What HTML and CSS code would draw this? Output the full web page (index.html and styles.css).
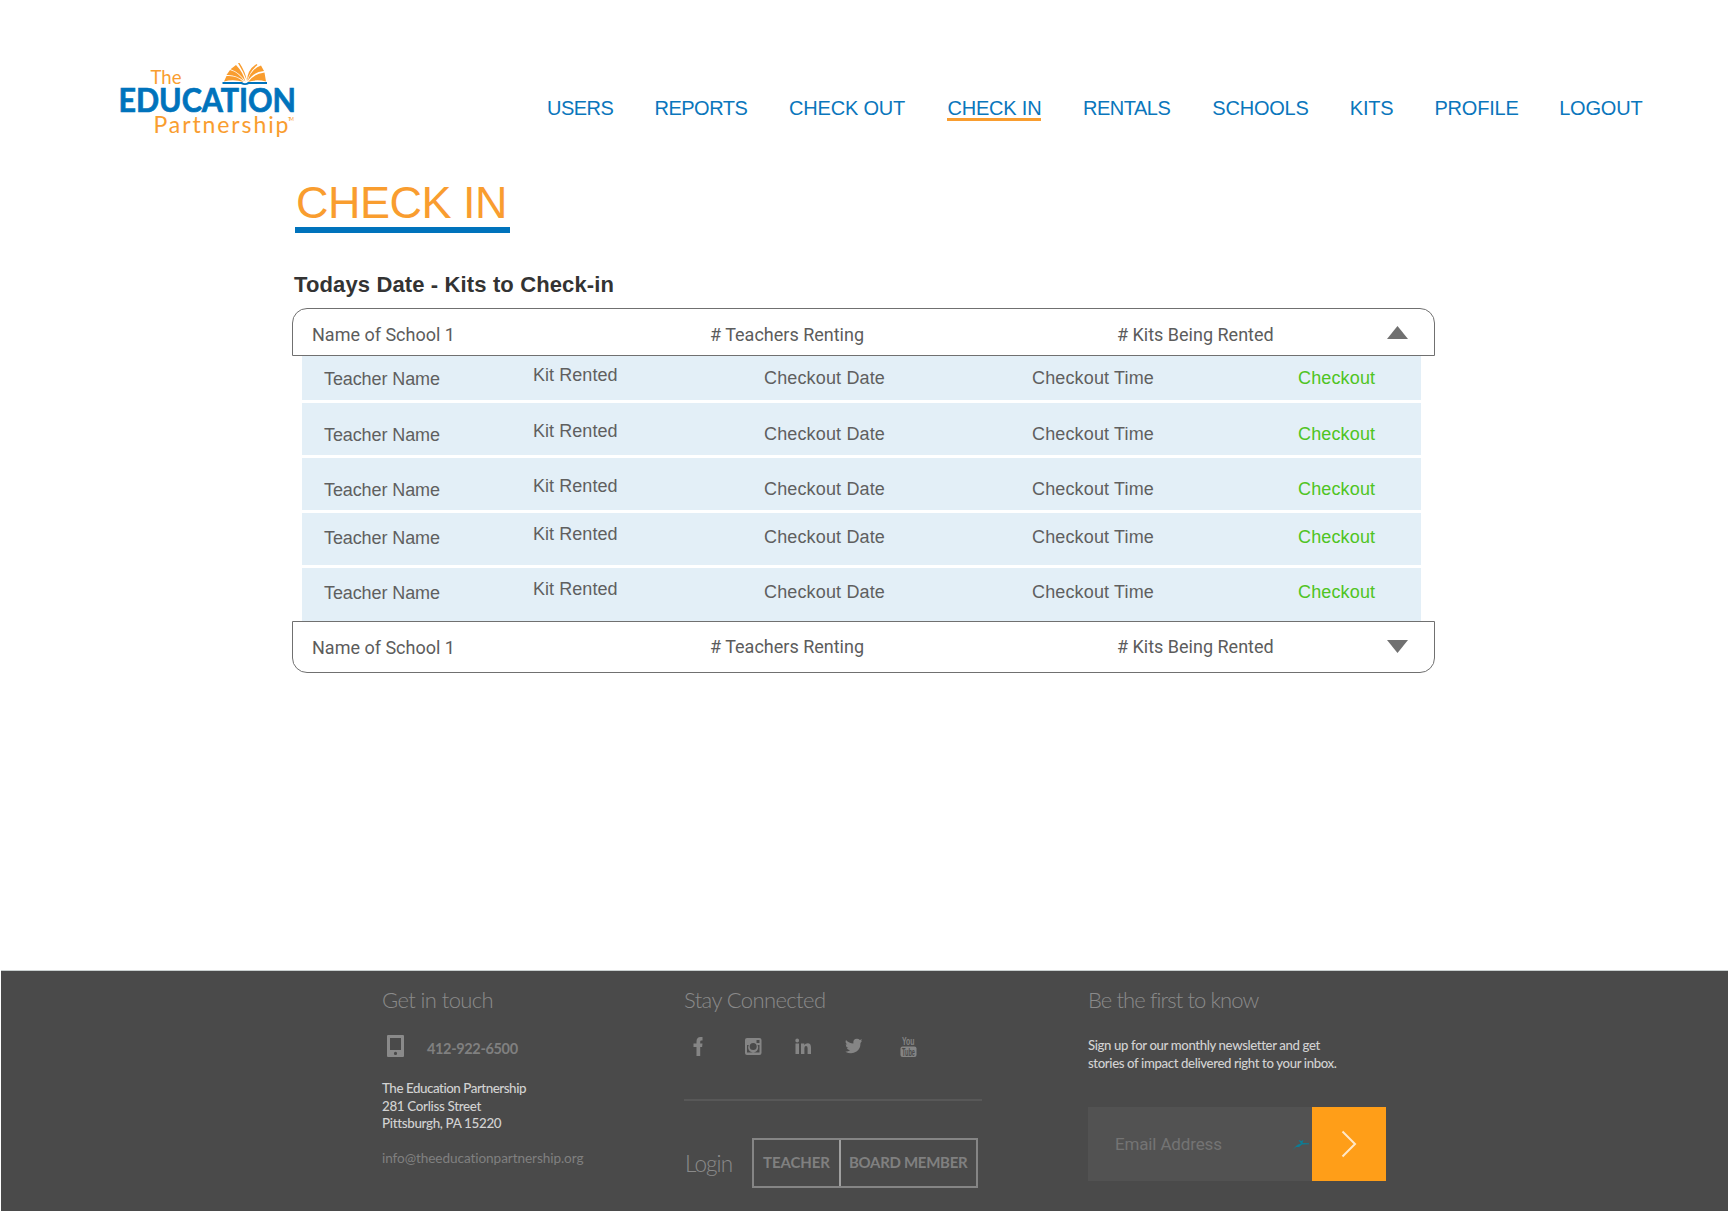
FILE: index.html
```html
<!DOCTYPE html>
<html lang="en">
<head>
<meta charset="utf-8">
<title>Check In</title>
<link rel="stylesheet" href="styles.css">
</head>
<body>
<header class="top">
  <svg class="logo" width="180" height="84" viewBox="118 58 180 84" role="img" aria-label="The Education Partnership">
    <g fill="#f99d2f">
      <path d="M224 81.500L226.500 76Q237 75 243.500 82Q234 79 224 81.500Z"/>
      <path d="M226.500 75L230 70Q240 73 244 81.500Q237 74.500 226.500 75Z"/>
      <path d="M230.500 69.300L236 65Q243 72 245.500 82Q240 72.500 230.500 69.300Z"/>
      <path d="M238 63L239.500 63Q245 71 247 81Q243 71 238 63Z"/>
      <path d="M247 81.500Q247 70 256.500 64L257.500 65Q249.500 71.500 247 81.500Z"/>
      <path d="M247.500 81.500Q251 69 261 65.500L264 71Q253 72 247.500 81.500Z"/>
      <path d="M248 82Q254 73.500 264.500 72.500L266 81.500Q256 79 248 82Z"/>
    </g>
    <path d="M222.500 82H242Q245 84.500 248 82H267V84H249Q245 86 241 84H222.500Z" fill="#0073bc"/>
    <text class="logo-thin" x="150.500" y="83.500" font-size="18.500" textLength="31" lengthAdjust="spacingAndGlyphs">The</text>
    <text class="logo-bold" x="118.500" y="111.500" font-size="32.500" textLength="177.500" lengthAdjust="spacingAndGlyphs">EDUCATION</text>
    <text class="logo-thin" x="153.500" y="132.500" font-size="23" textLength="135" lengthAdjust="spacing">Partnership</text>
    <text class="logo-thin" x="288" y="121" font-size="5" textLength="6">TM</text>
  </svg>
  <nav class="nav">
    <a class="tight">USERS</a><a class="tight">REPORTS</a><a>CHECK OUT</a><a class="active">CHECK IN</a><a class="tight">RENTALS</a><a>SCHOOLS</a><a>KITS</a><a>PROFILE</a><a>LOGOUT</a>
  </nav>
</header>
<main class="main">
  <h1 class="title">CHECK IN</h1>
  <h2 class="subtitle">Todays Date - Kits to Check-in</h2>
  <section class="school school-open">
    <span>Name of School 1</span><span># Teachers Renting</span><span># Kits Being Rented</span>
    <svg width="21" height="13" viewBox="0 0 21 13"><path d="M10.500 0L21 13H0Z" fill="#707070"/></svg>
  </section>
  <div class="rentals">
    <div class="rental first"><span class="teacher">Teacher Name</span><span class="kit">Kit Rented</span><span>Checkout Date</span><span>Checkout Time</span><a>Checkout</a></div>
    <div class="rental low"><span class="teacher">Teacher Name</span><span class="kit">Kit Rented</span><span>Checkout Date</span><span>Checkout Time</span><a>Checkout</a></div>
    <div class="rental low"><span class="teacher">Teacher Name</span><span class="kit">Kit Rented</span><span>Checkout Date</span><span>Checkout Time</span><a>Checkout</a></div>
    <div class="rental"><span class="teacher">Teacher Name</span><span class="kit">Kit Rented</span><span>Checkout Date</span><span>Checkout Time</span><a>Checkout</a></div>
    <div class="rental"><span class="teacher">Teacher Name</span><span class="kit">Kit Rented</span><span>Checkout Date</span><span>Checkout Time</span><a>Checkout</a></div>
  </div>
  <section class="school school-closed">
    <span class="name">Name of School 1</span><span># Teachers Renting</span><span># Kits Being Rented</span>
    <svg width="21" height="13" viewBox="0 0 21 13"><path d="M0 0H21L10.500 13Z" fill="#707070"/></svg>
  </section>
</main>
<footer class="footer">
  <div class="col">
    <h3 class="h-touch">Get in touch</h3>
    <div class="phone">
      <svg width="17" height="22" viewBox="0 0 17 22"><path fill="#8a8a8a" fill-rule="evenodd" d="M1 0H16Q17 0 17 1V21Q17 22 16 22H1Q0 22 0 21V1Q0 0 1 0ZM3 3V15H14V3ZM8.500 16.800A1.600 1.600 0 1 0 8.500 20A1.600 1.600 0 1 0 8.500 16.800Z"/></svg>
      <b>412-922-6500</b>
    </div>
    <p class="address"><span class="org">The Education Partnership</span><br>281 Corliss Street<br>Pittsburgh, PA 15220</p>
    <a class="email">info@theeducationpartnership.org</a>
  </div>
  <div class="col">
    <h3 class="h-stay">Stay Connected</h3>
    <svg class="social" width="240" height="24" viewBox="684 1034 240 24" fill="#858585">
      <path d="M696.500 1056V1047H693.500V1043.500H696.500V1041.500Q696.500 1037 700.500 1037H702.500V1040.500H701.300Q700.200 1040.500 700.200 1041.800V1043.500H702.500L702.100 1047H700.200V1056Z"/>
      <path fill-rule="evenodd" d="M747 1038H759.500Q761.500 1038 761.500 1040V1053Q761.500 1055 759.500 1055H747Q745 1055 745 1053V1040Q745 1038 747 1038ZM756.500 1040V1043H759.500V1040ZM747 1045V1052.500H759.500V1045H757.500A5 5 0 1 1 748.800 1045ZM753.200 1043A3.500 3.500 0 1 0 753.200 1050A3.500 3.500 0 1 0 753.200 1043Z"/>
      <path d="M795.500 1043.500H799V1054H795.500ZM797.200 1038.600A1.900 1.900 0 1 1 797.200 1042.400A1.900 1.900 0 1 1 797.200 1038.600ZM801 1043.500H804.300V1045Q805.500 1043.200 807.700 1043.200Q811 1043.200 811 1047.500V1054H807.600V1048.300Q807.600 1046.100 806 1046.100Q804.400 1046.100 804.400 1048.300V1054H801Z"/>
      <path d="M846 1040Q849 1043.300 853.400 1043.500Q852.700 1039 857 1038.800Q858.700 1038.800 859.800 1040L862 1039.200L861 1041.200L862 1041L860.500 1043Q860.500 1049 856.500 1051.500Q851.500 1054.800 845.300 1051.700Q848.400 1051.700 850 1050.300Q847.500 1050 846.800 1048H848.300Q845.700 1047 845.700 1044.200L847.200 1044.600Q844.800 1042.500 846 1040Z"/>
      <rect x="900.500" y="1046.500" width="16" height="10.500" rx="2"/>
      <text class="tube" x="902" y="1045" font-size="11" textLength="12.500" lengthAdjust="spacingAndGlyphs">You</text>
      <text class="tube" x="902" y="1055.500" font-size="10" textLength="13" lengthAdjust="spacingAndGlyphs" fill="#4a4a4a">Tube</text>
    </svg>
    <div class="login">
      <span class="login-label">Login</span>
      <div class="buttons"><a class="b1">TEACHER</a><a class="b2">BOARD MEMBER</a></div>
    </div>
  </div>
  <div class="col">
    <h3 class="h-know">Be the first to know</h3>
    <p class="news">Sign up for our monthly newsletter and get<br>stories of impact delivered right to your inbox.</p>
    <div class="signup">
      <div class="field"><span>Email Address</span>
        <svg width="17" height="12" viewBox="0 0 17 12" fill="#0c7c95"><path d="M0 11.500L4 7L6 5.500L9 4.500L6.500 1L9.500 2L11.500 .800L10.500 4L17 4.200V5.300L10 5.500L7 8L4 8Z"/></svg>
      </div>
      <div class="go"><svg width="16" height="28" viewBox="0 0 16 28"><path d="M1.500 1.500L14 14L1.500 26.500" fill="none" stroke="#ffe8c8" stroke-width="2"/></svg></div>
    </div>
  </div>
</footer>
</body>
</html>
```
FILE: styles.css
```css
* { box-sizing: border-box; }
body { margin: 0; width: 1728px; height: 1212px; background: #fff; font-family: "Liberation Sans", Arial, sans-serif; overflow: hidden; }
h1, h2, h3, p { margin: 0; font-weight: 400; }
svg { display: block; }

.top { display: flex; height: 170px; padding: 58px 0 0 118px; }
.logo { flex: none; overflow: visible; }
.logo-thin { font-family: Lato, sans-serif; fill: #f99d2f; }
.logo-bold { font-family: Lato, sans-serif; font-weight: 700; fill: #0073bc; stroke: #0073bc; stroke-width: 0.7px; }
.nav { display: grid; grid-template-columns: 107.5px 134.6px 158.4px 135.5px 129.3px 137.5px 84.7px 124.7px 90px; margin-left: 249px; padding-top: 38px; color: #0a76bc; font-size: 20px; line-height: 24px; letter-spacing: -0.2px; white-space: nowrap; }
.nav a { justify-self: start; height: 25px; }
.nav .tight { letter-spacing: -0.5px; }
.nav .active { border-bottom: 3px solid #f99d2f; }

.main { height: 800px; padding: 6px 0 0 292px; }
.title { width: 215px; height: 57px; margin-left: 3px; padding-left: 1px; border-bottom: 6px solid #0073bc; color: #f99d2f; font-size: 45px; line-height: 54px; letter-spacing: -0.5px; white-space: nowrap; }
.subtitle { height: 75px; padding: 39px 0 0 2px; color: #333; font-size: 22px; line-height: 26px; font-weight: 700; letter-spacing: 0.13px; }
.school { display: grid; grid-template-columns: 398px 407px 270px 21px; width: 1143px; padding-left: 19px; border: 1px solid #707070; color: #5c5c5c; font: 18px/20px Roboto, sans-serif; white-space: nowrap; }
.school-open { height: 48px; padding-top: 16px; border-radius: 15px 15px 0 0; }
.school-closed { height: 52px; padding-top: 15px; border-radius: 0 0 15px 15px; }
.school-closed .name { margin-top: 1px; }
.school-open svg { margin-top: 1px; }
.school-closed svg { margin-top: 3px; }
.rentals { display: grid; grid-template-rows: 44px 52px 52px 52px 53px; gap: 3px; width: 1119px; margin-left: 10px; }
.rental { display: grid; grid-template-columns: 209px 231px 268px 266px 100px; padding: 14px 0 0 22px; background: #e3eff7; color: #5f5f5f; font-size: 18px; line-height: 20px; letter-spacing: 0.15px; white-space: nowrap; }
.rental.first { padding-top: 12px; }
.rental.low { padding-top: 21px; }
.rental a { color: #4fc423; }
.rental .teacher { margin-top: 1px; letter-spacing: -0.1px; }
.rental .kit { margin-top: -3px; letter-spacing: 0.05px; }

.footer { display: grid; grid-template-columns: 302px 404px 300px; height: 241px; margin: 0 0 1px 1px; padding: 14px 0 0 381px; border-top: 1px solid #c9cfcf; background: #4a4a4a; color: #808080; font-family: Lato, sans-serif; white-space: nowrap; }
.footer h3 { height: 50px; font-size: 22px; line-height: 30px; font-weight: 300; color: #8a8a8a; }
.footer .h-touch { letter-spacing: -0.6px; }
.footer .h-stay { letter-spacing: -0.6px; }
.footer .h-know { letter-spacing: -0.9px; }
.phone { display: flex; gap: 23px; height: 45px; padding: 0 0 0 5px; font-size: 14.500px; line-height: 24px; letter-spacing: -0.35px; }
.phone b { padding-top: 2px; }
.address { height: 69px; font-size: 13.400px; line-height: 17.600px; font-weight: 500; letter-spacing: -0.33px; color: #d2d2d2; }
.address .org { letter-spacing: -0.47px; }
.email { display: block; font-size: 13.600px; line-height: 18px; letter-spacing: -0.08px; }
.social { height: 24px; margin-top: -1px; }
.tube { font-family: "Liberation Sans", sans-serif; font-weight: 700; }
.login { display: flex; width: 298px; margin-top: 41px; padding-top: 37px; border-top: 2px solid #585858; }
.login-label { width: 68px; padding: 12px 0 0 1px; font-size: 22.500px; line-height: 28px; font-weight: 300; letter-spacing: -0.9px; color: #8a8a8a; }
.buttons { display: grid; grid-template-columns: 87px 135px; height: 50px; border: 2px solid #858585; font-size: 15px; line-height: 45px; font-weight: 700; letter-spacing: -0.1px; }
.b1 { padding-left: 9px; border-right: 2px solid #a0a0a0; }
.b2 { padding-left: 8px; letter-spacing: -0.3px; }
.news { height: 72px; padding-top: 2px; font-size: 13.200px; line-height: 17.600px; font-weight: 500; letter-spacing: -0.37px; color: #d2d2d2; }
.signup { display: flex; height: 74px; }
.field { display: flex; width: 224px; padding: 27px 0 0 27px; background: #525252; color: #747474; font: 17px/20px Roboto, sans-serif; letter-spacing: -0.15px; }
.field span { width: 177px; }
.field svg { margin-top: 5px; }
.go { display: grid; place-items: center; width: 73.500px; background: #ff9e18; }
```
